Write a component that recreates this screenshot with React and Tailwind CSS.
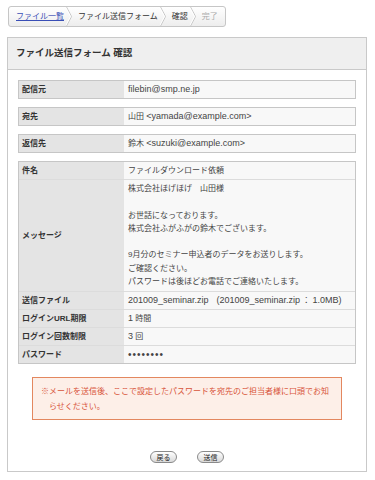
import React from 'react';

const FONT = { fontFamily: '"Liberation Sans", "Noto Sans CJK JP", sans-serif' };

// Latin runs are set a touch larger, like the original's Lucida next to Hiragino
const L = ({ children }) => <span className="text-[9px]">{children}</span>;

const topRows = [
  { label: '配信元', value: <L>filebin@smp.ne.jp</L> },
  { label: '宛先', value: <>山田 <L>&lt;yamada@example.com&gt;</L></> },
  { label: '返信先', value: <>鈴木 <L>&lt;suzuki@example.com&gt;</L></> },
];

const message = [
  '株式会社ほげほげ　山田様',
  '',
  'お世話になっております。',
  '株式会社ふがふがの鈴木でございます。',
  '',
  '9月分のセミナー申込者のデータをお送りします。',
  'ご確認ください。',
  'パスワードは後ほどお電話でご連絡いたします。',
];

const bottomRows = [
  {
    label: '送信ファイル',
    value: (
      <>
        <L>201009_seminar.zip</L>　<L>(201009_seminar.zip</L> ： <L>1.0MB)</L>
      </>
    ),
  },
  { label: 'ログインURL期限', value: <><L>1</L> 時間</> },
  { label: 'ログイン回数制限', value: <><L>3</L> 回</> },
  { label: 'パスワード', value: '••••••••', dots: true },
];

function Chevron() {
  return (
    <svg width="6" height="19" viewBox="0 0 6 19" className="ml-[2px] shrink-0">
      <polyline points="0.5,0 5.5,9.5 0.5,19" fill="none" stroke="#c4c4c4" strokeWidth="1" />
      <polyline points="-0.5,0 4.5,9.5 -0.5,19" fill="none" stroke="#ffffff" strokeWidth="1" />
    </svg>
  );
}

function Breadcrumb() {
  return (
    <div className="ml-[8px] mt-[6px] inline-flex h-[21px] items-center rounded-[3px] border border-[#c6c6c6] bg-gradient-to-b from-white to-[#ededed] pl-[7px] pr-[7px] text-[8px] leading-none">
      <a className="text-[#3a4fb6] underline">ファイル一覧</a>
      <Chevron />
      <span className="ml-[6px] text-[#333]">ファイル送信フォーム</span>
      <Chevron />
      <span className="ml-[6px] text-[#333]">確認</span>
      <Chevron />
      <span className="ml-[6px] text-[#aaa]">完了</span>
    </div>
  );
}

function Row({ label, children, last, className = '' }) {
  return (
    <div className={`flex ${last ? '' : 'border-b border-[#dcdcdc]'}`}>
      <div className="flex w-[105px] shrink-0 items-center bg-[#e4e4e4] pl-[3px] font-bold text-[#333]">
        {label}
      </div>
      <div className={`flex-1 bg-[#f8f8f8] pl-[4px] text-[#444] ${className}`}>{children}</div>
    </div>
  );
}

export default function App() {
  return (
    <div className="min-h-[480px] bg-white pb-[7px]" style={FONT}>
      <Breadcrumb />

      <div className="ml-[7px] mt-[10px] w-[360px] border border-[#c9c9c9]">
        {/* Header */}
        <div className="flex h-[32px] items-center border-b border-[#c9c9c9] bg-[#efefef] pl-[8px]">
          <h1 className="text-[9.5px] font-bold text-[#333]">ファイル送信フォーム 確認</h1>
        </div>

        {/* Content */}
        <div className="px-[10px] pt-[10px] pb-[8px] text-[8px] leading-[14px]">
          <div className="flex flex-col gap-[8px]">
            {topRows.map((r) => (
              <div key={r.label} className="border border-[#c6c6c6]">
                <Row label={r.label} last className="flex h-[17px] items-center">
                  <span>{r.value}</span>
                </Row>
              </div>
            ))}

            <div className="border border-[#c6c6c6]">
              <Row label="件名" className="flex h-[17px] items-center">
                <span>ファイルダウンロード依頼</span>
              </Row>
              <Row label="メッセージ" className="pt-[2px] pb-[3px]">
                {message.map((line, i) => (
                  <div key={i} className="h-[13.3px] leading-[13.3px]">{line}</div>
                ))}
              </Row>
              {bottomRows.map((r, i) => (
                <Row
                  key={r.label}
                  label={r.label}
                  last={i === bottomRows.length - 1}
                  className={`flex h-[17px] items-center ${r.dots ? 'text-[10px] tracking-[1px] text-[#222]' : ''}`}
                >
                  <span>{r.value}</span>
                </Row>
              ))}
            </div>
          </div>

          {/* Notice */}
          <div className="mx-[14px] mt-[13px] border border-[#e3875f] bg-[#fdefe8] pt-[6px] pb-[5px] pr-[8px] pl-[16px] -indent-[8px] leading-[15px] text-[#d8543a]">
            ※メールを送信後、ここで設定したパスワードを宛先のご担当者様に口頭でお知らせください。
          </div>

          {/* Buttons */}
          <div className="mt-[31px] flex justify-center gap-[20px]">
            <button className="flex h-[12px] w-[27px] items-center justify-center rounded-full border border-[#8a8a8a] bg-gradient-to-b from-white to-[#d9d9d9] text-[7px] leading-none text-[#222]">
              戻る
            </button>
            <button className="flex h-[12px] w-[27px] items-center justify-center rounded-full border border-[#8a8a8a] bg-gradient-to-b from-white to-[#d9d9d9] text-[7px] leading-none text-[#222]">
              送信
            </button>
          </div>
        </div>
      </div>
    </div>
  );
}
